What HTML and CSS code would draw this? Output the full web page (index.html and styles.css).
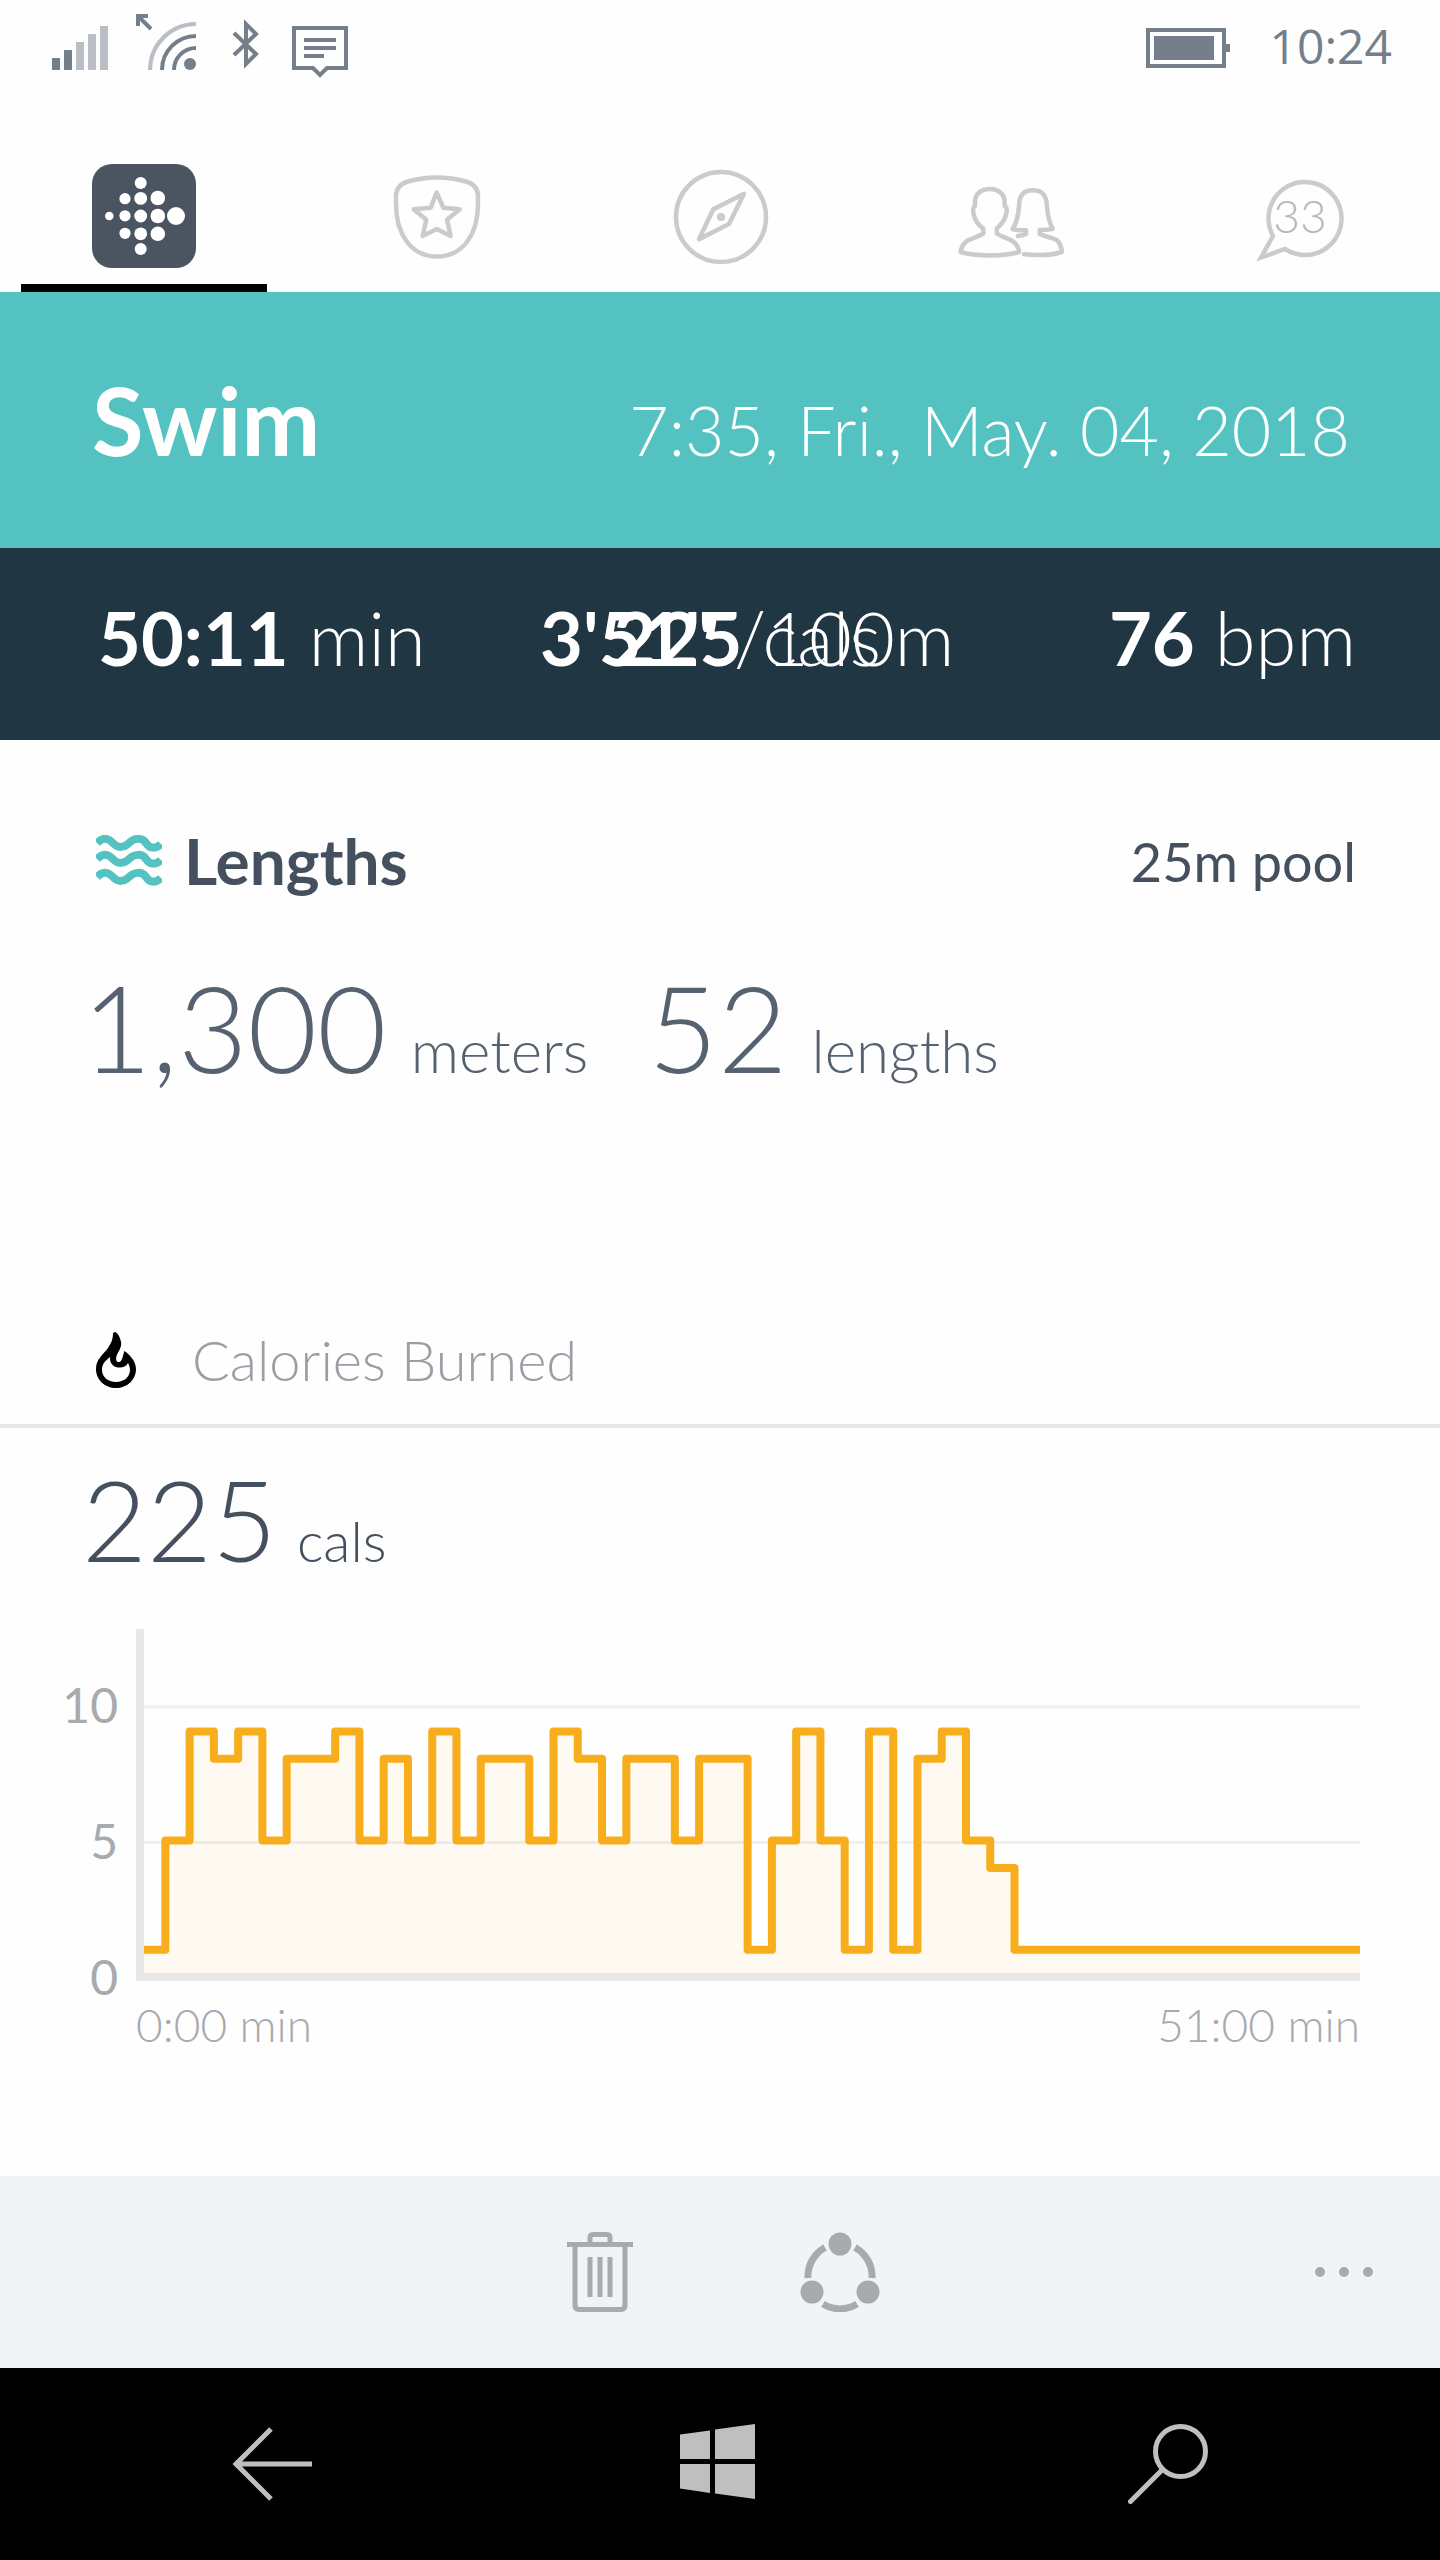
FILE: index.html
```html
<!DOCTYPE html>
<html lang="en">
  <head>
    <meta charset="UTF-8" />
    <meta name="viewport" content="width=device-width, initial-scale=1.0" />
    <title>Swim</title>
    <link rel="stylesheet" href="styles.css">
  </head>
  <body>
    <div class="status_bar">
      <svg width="56" height="96" viewBox="0 0 56 96" fill="#757f8b">
        <path d="M0 58h8v12h-8zM12 50h8v20h-8z" />
        <path d="M24 42h8v28h-8zM36 34h8v36h-8zM48 26h8v44h-8z" fill="#babfc7" />
      </svg>
      <svg width="60" height="96" viewBox="0 0 60 96" fill="none" stroke="#757f8b" stroke-width="4">
        <path d="M14 70A46 46 0 0 1 60 24" stroke="#babfc7" />
        <path d="M26 70A34 34 0 0 1 60 36M38 70A22 22 0 0 1 60 48" />
        <path d="M2 26V16H12M3 17L15 29" />
        <circle cx="54" cy="64" r="6" fill="#757f8b" stroke="none" />
      </svg>
      <svg width="40" height="96" viewBox="0 0 40 96" fill="none" stroke="#757f8b" stroke-width="4">
        <path d="M10 33L32 54L22 64V24L32 34L10 55" />
      </svg>
      <svg width="56" height="96" viewBox="0 0 56 96" fill="none" stroke="#757f8b" stroke-width="4">
        <path d="M2 28H54V68H35L28 75L21 68H2Z" />
        <path d="M12 40H44M12 48H44M12 56H32" />
      </svg>
      <svg class="battery" width="84" height="96" viewBox="0 0 84 96" fill="#757f8b">
        <path d="M2 30H78V66H2Z" fill="none" stroke="#757f8b" stroke-width="4" />
        <path d="M8 36h60v24h-60zM80 44h4v8h-4z" />
      </svg>
      <span class="clock">10:24</span>
    </div>

    <nav class="tabs">
      <a class="tab active" href="#" aria-label="Dashboard">
        <svg width="104" height="104" viewBox="0 0 104 104" fill="#fff">
          <rect width="104" height="104" rx="20" fill="#4b5461" />
          <circle cx="17.3" cy="52" r="4.3" />
          <circle cx="33" cy="34.7" r="5.6" />
          <circle cx="33" cy="51.8" r="5.6" />
          <circle cx="33" cy="69.3" r="5.6" />
          <circle cx="48.7" cy="19" r="6" />
          <circle cx="48.7" cy="34.4" r="6.4" />
          <circle cx="48.7" cy="52" r="6.4" />
          <circle cx="48.7" cy="69.8" r="6.4" />
          <circle cx="48.7" cy="85" r="6" />
          <circle cx="65.8" cy="34" r="7.3" />
          <circle cx="65.8" cy="52" r="7.3" />
          <circle cx="65.8" cy="69.8" r="7.3" />
          <circle cx="84" cy="52" r="9" />
        </svg>
      </a>
      <a class="tab" href="#" aria-label="Challenges">
        <svg class="line_icon" width="104" height="104" viewBox="0 0 104 104">
          <path d="M57 13.5C67 13.5 77 15 86 17.5C93 19.5 97.5 24 98 31V40C98 70 83 92.5 57 92.5S16 70 16 40V31C16.5 24 21 19.5 28 17.5C37 15 47 13.5 57 13.5Z" />
          <path d="M56.7 28.7L63.3 43.7L79.7 45.3L67 55.7L70.7 72L56.7 65L42.7 72L46.3 55.7L33.7 45.3L50.7 43.7Z" />
        </svg>
      </a>
      <a class="tab" href="#" aria-label="Guidance">
        <svg class="line_icon" width="104" height="104" viewBox="0 0 104 104">
          <circle cx="53" cy="53" r="45" />
          <path d="M76 29.7L45.3 45.3L31 75.3L61 60Z" />
          <circle cx="53" cy="53" r="1.8" />
        </svg>
      </a>
      <a class="tab" href="#" aria-label="Friends">
        <svg class="line_icon" width="104" height="104" viewBox="0 0 104 104">
          <path d="M34 25C25 25 19 30 19 38V42C17 43 17 47 17.4 49C18.5 55 22 61 27.3 64.7V69.5C22 73 16 74 11.2 76.7C7 80 5 84 4.6 88C20 92.5 48 92.5 63.2 88C63 84 60 79 56 76.7C51 74 46 73 40.8 69.5V64.7C46 60 49.5 54 50.4 49C50.8 47 51 43 48.6 42V38C48.6 30 42 25 34 25Z" />
          <path d="M61.8 72C65 71.5 68 71.5 70 70V66.3C65 66.5 60 66 56.6 65C60 60 62.5 50 63 42C63 31 68 26.3 77 26.3S90.5 31 91 42C91.5 50 93 58 96.6 64.7C93 66 88 66 83.8 66V70C89 73 96 73 100.7 76C104 79 105.5 83 105.9 88C95 91.5 80 91.5 68 90.3" />
        </svg>
      </a>
      <a class="tab" href="#" aria-label="Notifications">
        <svg class="line_icon" width="104" height="104" viewBox="0 0 104 104">
          <path stroke-linejoin="miter" d="M29 72L17 93.5L41 85A36.5 36.5 0 1 0 29 72Z" />
        </svg>
        <span class="count">33</span>
      </a>
    </nav>

    <header class="title_bar">
      <h1>Swim</h1>
      <span class="date">7:35, Fri., May. 04, 2018</span>
    </header>

    <div class="stats">
      <div class="stat"><b>50:11</b> min</div>
      <!-- pace and calories share the middle cell -->
      <div class="stat middle"><b>3'51"</b> /100m</div>
      <div class="stat middle"><b>225</b> cals</div>
      <div class="stat"><b>76</b> bpm</div>
    </div>

    <main>
      <section class="lengths">
        <div class="lengths_head">
          <svg width="66" height="52" viewBox="0 0 66 52" fill="none" stroke="#54c2c0" stroke-width="8">
            <path d="M1 8C9 0 14 5 18 9S28 13 33 8S46 2 50 8S60 14 65 9" />
            <path d="M1 24C9 16 14 21 18 25S28 29 33 24S46 18 50 24S60 30 65 25" />
            <path d="M1 42C9 34 14 39 18 43S28 47 33 42S46 36 50 42S60 48 65 43" />
          </svg>
          <h2>Lengths</h2>
          <span class="pool">25m pool</span>
        </div>
        <div class="lengths_values">
          <span class="big">1,300</span>
          <span class="unit">meters</span>
          <span class="big">52</span>
          <span class="unit">lengths</span>
        </div>
      </section>

      <section class="calories">
        <div class="calories_head">
          <svg width="40" height="56" viewBox="0 0 40 56">
            <path fill-rule="evenodd" d="M19 0C22 1 24.5 6 25.2 11C25.5 16 22 20 20.5 24C19.5 28 20.5 30.5 23.5 30C26.5 29 26.5 24 28.5 19C33 22 40 29 40 37C40 48 31 56 20 56S0 48 0 37C0 27 7 23 12 16C16 10 17 6 17 1ZM14 25C9 29 6 32 6 38C6 45 12 50 20 50S34 45 34 38C34 35 33 33 32 31C30 35 26 36 22 35.5C16 34.5 13.5 30 14 25Z" />
          </svg>
          <h3>Calories Burned</h3>
        </div>
        <div class="calories_value">
          <span class="big">225</span>
          <span class="unit">cals</span>
        </div>

        <div class="chart">
          <div class="y_axis">
            <span>10</span>
            <span>5</span>
            <span>0</span>
          </div>
          <div class="plot">
            <!-- one x unit per minute, one y unit per calorie, zero line at 12.75 -->
            <svg viewBox="0.12 0 50.12 12.6" preserveAspectRatio="none">
              <path class="grid" d="M0 2.85H51M0 7.82H51" />
              <path class="area" d="M0 11.75H1V7.75H2V3.75H3V4.75H4V3.75H5V7.75H6V4.75H8V3.75H9V7.75H10V4.75H11V7.75H12V3.75H13V7.75H14V4.75H16V7.75H17V3.75H18V4.75H19V7.75H20V4.75H22V7.75H23V4.75H25V11.75H26V7.75H27V3.75H28V7.75H29V11.75H30V3.75H31V11.75H32V4.75H33V3.75H34V7.75H35V8.75H36V11.75H51V13H0Z" />
              <path class="line" d="M0 11.75H1V7.75H2V3.75H3V4.75H4V3.75H5V7.75H6V4.75H8V3.75H9V7.75H10V4.75H11V7.75H12V3.75H13V7.75H14V4.75H16V7.75H17V3.75H18V4.75H19V7.75H20V4.75H22V7.75H23V4.75H25V11.75H26V7.75H27V3.75H28V7.75H29V11.75H30V3.75H31V11.75H32V4.75H33V3.75H34V7.75H35V8.75H36V11.75H51" />
            </svg>
          </div>
          <div class="x_axis">
            <span>0:00 min</span>
            <span>51:00 min</span>
          </div>
        </div>
      </section>
    </main>

    <div class="app_bar">
      <button class="delete" aria-label="Delete">
        <svg width="66" height="80" viewBox="0 0 66 80" fill="none" stroke="#a7aaaf" stroke-width="5">
          <path d="M0 12.5H66M23 12V6Q23 2.5 26 2.5H40Q43 2.5 43 6V12" />
          <path d="M8 12V73Q8 77.5 12 77.5H54Q58 77.5 58 73V12M23 25V65M33 25V65M43 25V65" />
        </svg>
      </button>
      <button class="share" aria-label="Share">
        <svg width="80" height="80" viewBox="0 0 80 80" fill="#a7aaaf">
          <circle cx="40" cy="12" r="11.5" />
          <circle cx="12" cy="60" r="11.5" />
          <circle cx="68" cy="60" r="11.5" />
          <path d="M8 46A33 33 0 0 1 25 15.5M55 15.5A33 33 0 0 1 72 46M23 72A32 32 0 0 0 57 72" fill="none" stroke="#a7aaaf" stroke-width="7" />
        </svg>
      </button>
      <button class="more" aria-label="More">
        <svg width="60" height="10" viewBox="0 0 60 10" fill="#a7aaaf">
          <circle cx="6" cy="5" r="5" />
          <circle cx="30" cy="5" r="5" />
          <circle cx="54" cy="5" r="5" />
        </svg>
      </button>
    </div>

    <div class="nav_bar">
      <button aria-label="Back">
        <svg width="80" height="80" viewBox="0 0 80 80" fill="none" stroke="#bfbfbf" stroke-width="5">
          <path d="M80 40H4M39 5L4 40L39 75" />
        </svg>
      </button>
      <button aria-label="Start">
        <svg width="80" height="80" viewBox="0 0 80 80" fill="#bfbfbf">
          <path d="M0 10.5L30 6.5V35H0ZM35 5.5L75 0V35H35ZM0 40H30V69L0 64.5ZM35 40H75V75L35 69.5Z" />
        </svg>
      </button>
      <button aria-label="Search">
        <svg width="80" height="80" viewBox="0 0 80 80" fill="none" stroke="#bfbfbf" stroke-width="5" stroke-linecap="round">
          <circle cx="52.5" cy="27.5" r="25" />
          <path d="M34 46L2.5 77.5" />
        </svg>
      </button>
    </div>
  </body>
</html>
```
FILE: styles.css
```css
* {
  box-sizing: border-box;
}
body {
  display: flex;
  flex-direction: column;
  min-height: 100vh;
  margin: 0;
  background-color: #fefefe;
  color: #44505e;
  font-family: Lato, "Open Sans", sans-serif;
  font-weight: 300;
}
h1,
h2,
h3 {
  margin: 0;
}
b {
  font-weight: 700;
}
svg {
  display: block;
}
button {
  display: flex;
  align-items: center;
  justify-content: center;
  padding: 0;
  border: none;
  background: none;
  cursor: pointer;
}

.status_bar {
  display: flex;
  gap: 28px;
  height: 96px;
  padding: 0 48px 0 52px;
}
.battery {
  margin-left: auto;
}
.clock {
  margin-left: 12px;
  color: #757f8b;
  font-family: "Open Sans", "Noto Sans", sans-serif;
  font-size: 48px;
  font-weight: 400;
  line-height: 92px;
}

.tabs {
  display: grid;
  grid-template-columns: repeat(5, 1fr);
}
.tab {
  position: relative;
  display: flex;
  justify-content: center;
  height: 196px;
  padding-top: 68px;
  text-decoration: none;
}
.tab.active::after {
  content: "";
  position: absolute;
  left: 21px;
  right: 21px;
  bottom: 0;
  height: 8px;
  background-color: #000;
}
.line_icon {
  overflow: visible;
  fill: none;
  stroke: #cbcbcb;
  stroke-width: 4.5;
  stroke-linejoin: round;
  stroke-linecap: round;
}
.count {
  position: absolute;
  left: 0;
  right: 0;
  top: 92px;
  padding-left: 8px;
  color: #b8b8b8;
  font-size: 46px;
  line-height: 56px;
  text-align: center;
}

.title_bar {
  display: flex;
  align-items: baseline;
  justify-content: space-between;
  height: 256px;
  padding: 76px 90px 0 92px;
  background-color: #54c2c0;
  color: #fff;
}
.title_bar h1 {
  font-size: 94px;
  line-height: 104px;
}
.date {
  font-size: 68px;
}

.stats {
  display: grid;
  grid-template-columns: auto 1fr auto;
  align-items: center;
  height: 192px;
  padding: 0 84px 14px 98px;
  background-color: #203643;
  color: #fff;
  font-size: 74px;
}
.stat {
  grid-row: 1;
  white-space: nowrap;
}
.stat.middle {
  grid-column: 2;
  justify-self: center;
  padding-right: 40px;
}

main {
  flex: 1;
}
.lengths_head {
  display: flex;
  align-items: center;
  padding: 85px 84px 0 96px;
}
.lengths_head h2 {
  margin-left: 22px;
  font-size: 64px;
  line-height: 72px;
}
.pool {
  margin-left: auto;
  font-size: 54px;
  font-weight: 400;
}
.lengths_values {
  display: flex;
  align-items: baseline;
  padding: 70px 84px 0 82px;
  color: #566270;
}
.lengths_values .big {
  font-size: 120px;
  line-height: 120px;
}
.lengths_values .unit {
  margin: 0 60px 0 24px;
  font-size: 60px;
  line-height: 72px;
}

.calories_head {
  display: flex;
  align-items: center;
  margin-top: 241px;
  padding: 0 96px 32px;
  border-bottom: 4px solid #e7e7e7;
}
.calories_head h3 {
  margin-left: 56px;
  color: #999fa5;
  font-size: 56px;
  font-weight: 300;
  line-height: 64px;
}
.calories_value {
  display: flex;
  align-items: baseline;
  padding: 37px 84px 0 82px;
}
.calories_value .big {
  font-size: 112px;
  line-height: 108px;
}
.calories_value .unit {
  margin-left: 20px;
  font-size: 56px;
}

.chart {
  display: grid;
  grid-template-columns: 118px 1fr;
  column-gap: 18px;
  margin: 55px 80px 0 0;
  color: #a7aaaf;
}
.y_axis {
  grid-row: 1 / 3;
  display: flex;
  flex-direction: column;
  padding-top: 8px;
  font-size: 48px;
  font-weight: 400;
  line-height: 136px;
  text-align: right;
}
.plot {
  height: 352px;
  border-left: 8px solid #e7e7e7;
  border-bottom: 8px solid #e7e7e7;
}
.plot svg {
  width: 100%;
  height: 100%;
}
.plot path {
  fill: none;
  vector-effect: non-scaling-stroke;
}
.plot .grid {
  stroke: #eff0f0;
  stroke-width: 3px;
}
.plot .area {
  fill: #f8ad1d;
  fill-opacity: 0.06;
}
.plot .line {
  stroke: #f8ad1d;
  stroke-width: 8px;
  stroke-linejoin: round;
}
.x_axis {
  display: flex;
  justify-content: space-between;
  padding-top: 16px;
  font-size: 46px;
  line-height: 56px;
}

.app_bar {
  display: grid;
  grid-template-columns: 1fr 240px 240px 1fr;
  height: 192px;
  background-color: #f0f4f5;
}
.delete {
  grid-column: 2;
}
.more {
  justify-self: end;
  width: 192px;
}

.nav_bar {
  display: flex;
  align-items: center;
  justify-content: space-between;
  height: 192px;
  padding: 0 232px;
  background-color: #000;
}
```
